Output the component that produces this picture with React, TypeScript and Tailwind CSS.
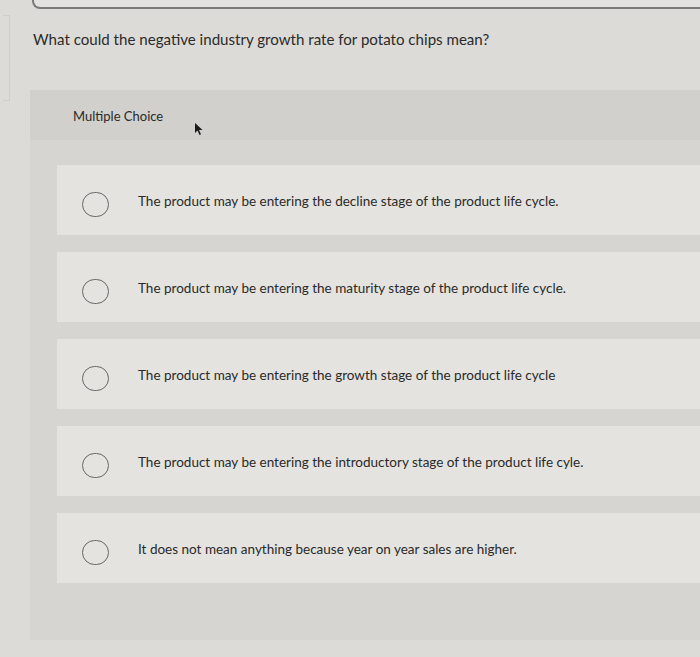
import React from "react";

const options = [
  "The product may be entering the decline stage of the product life cycle.",
  "The product may be entering the maturity stage of the product life cycle.",
  "The product may be entering the growth stage of the product life cycle",
  "The product may be entering the introductory stage of the product life cyle.",
  "It does not mean anything because year on year sales are higher.",
];

export default function App() {
  return (
    <div
      className="relative w-[700px] h-[657px] overflow-hidden bg-[#dcdbd7] text-[#2a2a2a]"
      style={{ fontFamily: "Lato, 'Open Sans', Arial, sans-serif" }}
    >
      {/* faint left panel edge */}
      <div className="absolute left-[3px] top-[15px] w-[7px] h-[86px] border border-[#cfcecb] border-l-0" />
      {/* top box edge */}
      <div className="ml-[32px] h-[9px] border-l-2 border-b-2 border-[#7a7a7a] rounded-bl-[8px] bg-[#e2e1dd]" />
      <div className="pl-[33px] pt-[21px] text-[15.1px] leading-[18px] text-[#2b2b2b]">
        What could the negative industry growth rate for potato chips mean?
      </div>

      {/* panel */}
      <div className="ml-[30px] mt-[42px] h-[550px] bg-[#d6d5d1]">
        <div className="relative h-[50px] bg-[#d1d0cc] pl-[43px] pt-[19px] text-[13px] leading-[15px] text-[#2a2a2a]">
          Multiple Choice
          <svg
            className="absolute left-[164px] top-[32px]"
            width="10"
            height="14"
            viewBox="0 0 10 14"
          >
            <path d="M1 1 L1 11 L3.5 8.5 L5.5 13 L7 12.3 L5 8 L8.5 8 Z" fill="#1a1a1a" />
          </svg>
        </div>
        <div className="pt-[25px] pl-[27px] flex flex-col gap-[17px]">
          {options.map((o) => (
            <div key={o} className="h-[70px] bg-[#e4e3df] flex items-center pt-[2px]">
              <div className="ml-[25px] w-[27px] h-[25px] rounded-full border-[1.5px] border-[#666] mt-[6px]" />
              <div className="ml-[29px] text-[13.5px] leading-[16px] text-[#2a2a2a]">{o}</div>
            </div>
          ))}
        </div>
      </div>
    </div>
  );
}
